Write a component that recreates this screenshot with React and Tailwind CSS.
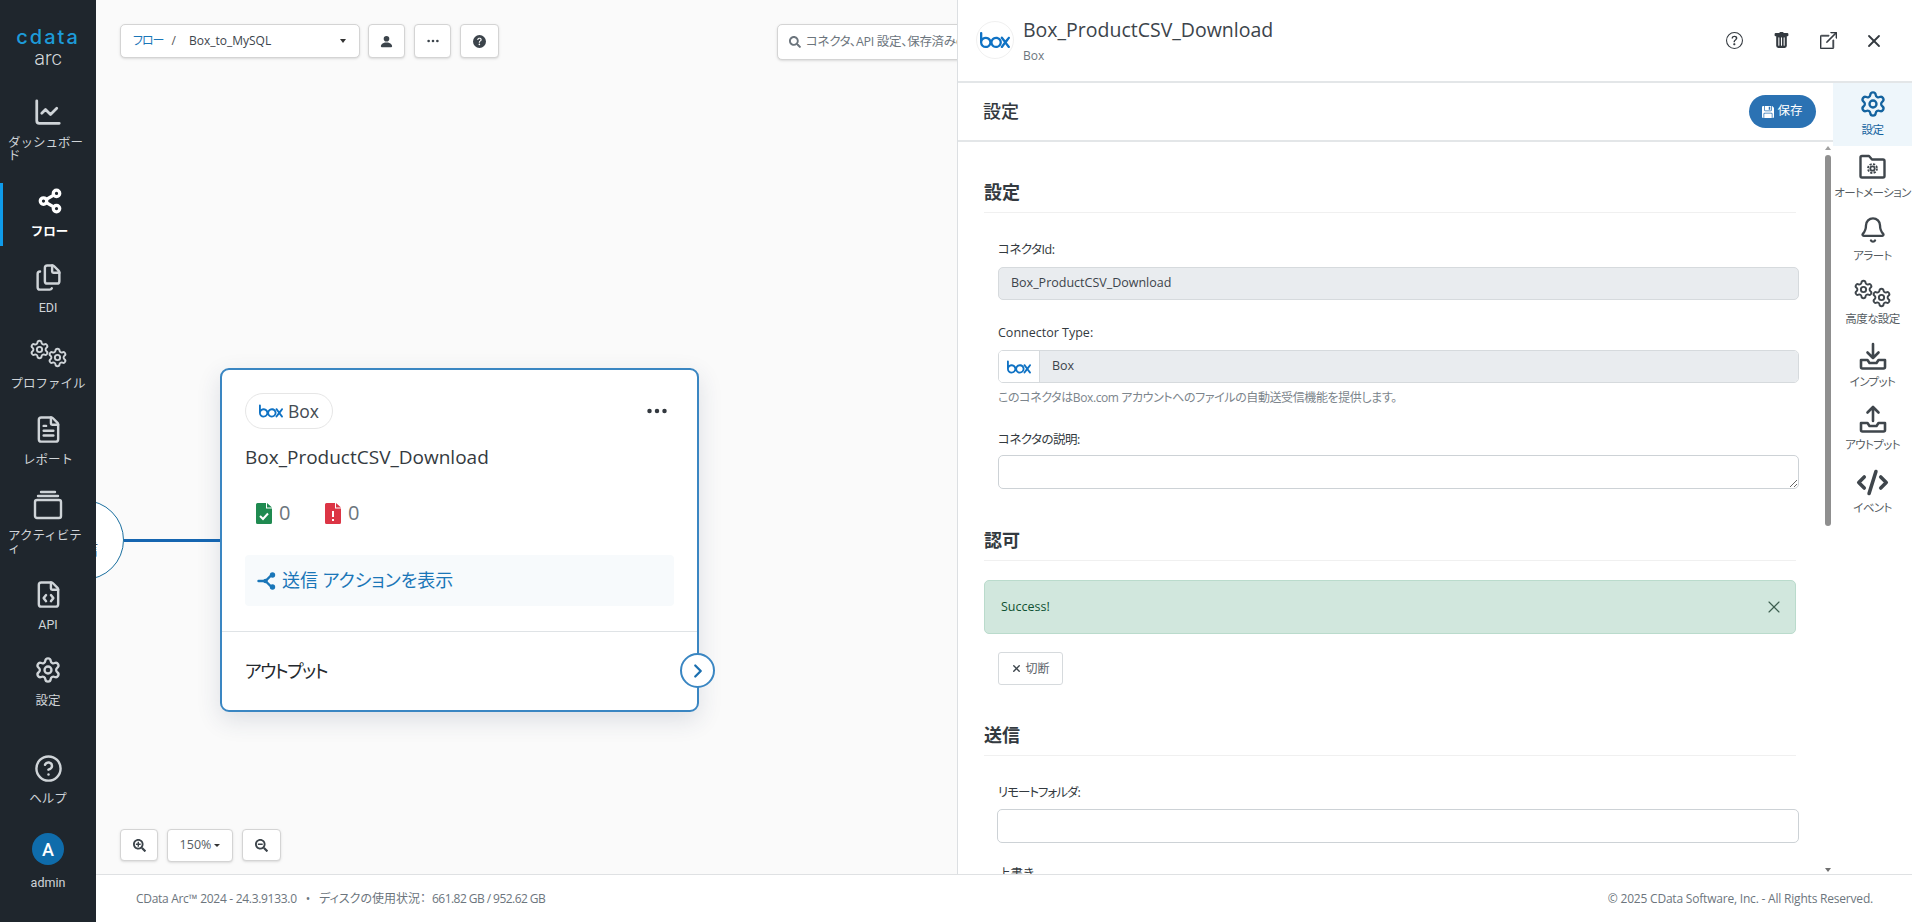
import {
  Bell,
  ChartLine,
  ChevronRight,
  CircleHelp,
  CodeXml,
  FileCode,
  FileText,
  Files,
  Settings,
  Share2,
  X,
} from "lucide-react";
import {
  BsBoxArrowUpRight,
  BsFloppyFill,
  BsPersonFill,
  BsQuestionCircle,
  BsQuestionCircleFill,
  BsThreeDots,
  BsTrashFill,
} from "react-icons/bs";
import { FaSearch, FaSearchMinus, FaSearchPlus } from "react-icons/fa";
import { SiBox } from "react-icons/si";

function TwoGears({ size = 21, stroke = 2.2 }) {
  return (
    <div className="flex items-center">
      <Settings size={size} strokeWidth={stroke} className="-mt-[8px]" />
      <Settings size={size} strokeWidth={stroke} className="-ml-[3px] mt-[8px]" />
    </div>
  );
}

function Stacked() {
  return (
    <svg width="32" height="30" viewBox="0 0 32 30" fill="none" stroke="currentColor" strokeWidth="2.4" strokeLinecap="round">
      <rect x="3" y="10" width="26" height="18" rx="2" />
      <path d="M6 6h20M9 2h14" />
    </svg>
  );
}

function Tray({ up }) {
  return (
    <svg width="30" height="30" viewBox="0 0 30 30" fill="none" stroke="currentColor" strokeWidth="2.6" strokeLinecap="round" strokeLinejoin="round">
      <path d="M3 19v7a1.5 1.5 0 0 0 1.5 1.5h21A1.5 1.5 0 0 0 27 26v-7h-6.5l-2 3h-7l-2-3z" />
      {up ? <path d="M15 17V3M9.5 8.5 15 3l5.5 5.5" /> : <path d="M15 3v14M9.5 11.5 15 17l5.5-5.5" />}
    </svg>
  );
}

function FolderGear() {
  return (
    <svg width="27" height="26" viewBox="0 0 27 26" fill="none" stroke="currentColor" strokeWidth="2.4" strokeLinejoin="round">
      <path d="M1.500 3.500A1.500 1.500 0 0 1 3 2h7l3 3.500h11A1.500 1.500 0 0 1 25.500 7v15a1.500 1.500 0 0 1-1.500 1.500H3A1.500 1.500 0 0 1 1.500 22z" />
      <circle cx="13.500" cy="14.500" r="2.200" strokeWidth="1.800" />
      <circle cx="13.500" cy="14.500" r="4.500" strokeWidth="1.800" strokeDasharray="2.200 1.330" />
    </svg>
  );
}

function SendIcon() {
  return (
    <svg width="20" height="20" viewBox="0 0 20 20" fill="none" stroke="currentColor" strokeWidth="2.4" strokeLinecap="round">
      <path d="M1.500 10h7l6-6M8.500 10l6 6" />
      <circle cx="15.500" cy="4" r="2.700" fill="currentColor" stroke="none" />
      <circle cx="15.500" cy="16" r="2.700" fill="currentColor" stroke="none" />
      <circle cx="8.500" cy="10" r="2.200" fill="currentColor" stroke="none" />
    </svg>
  );
}

function FileStatus({ color, ok }) {
  return (
    <svg width="16" height="21" viewBox="0 0 16 21" className={color}>
      <path fill="currentColor" d="M1.5 0H10v5.5h6v14a1.5 1.5 0 0 1-1.5 1.5h-13A1.5 1.5 0 0 1 0 19.5v-18A1.5 1.5 0 0 1 1.5 0zM11 0l5 4.500h-5z" />
      {ok ? (
        <path d="M4 13l3 3 5-5.500" stroke="#fff" strokeWidth="2" fill="none" />
      ) : (
        <path d="M8 8v6M8 16v2" stroke="#fff" strokeWidth="2" fill="none" />
      )}
    </svg>
  );
}

const navItems = [
  { label: "ダッシュボード", icon: <ChartLine size={30} strokeWidth={2.2} /> },
  { label: "フロー", icon: <Share2 size={26} strokeWidth={3} />, active: true },
  { label: "EDI", icon: <Files size={29} strokeWidth={2} /> },
  { label: "プロファイル", icon: <TwoGears /> },
  { label: "レポート", icon: <FileText size={29} strokeWidth={2} /> },
  { label: "アクティビティ", icon: <Stacked /> },
  { label: "API", icon: <FileCode size={29} strokeWidth={2} /> },
  { label: "設定", icon: <Settings size={28} strokeWidth={2} /> },
];

const railItems = [
  { label: "設定", icon: <Settings size={28} strokeWidth={2} />, active: true },
  { label: "オートメーション", icon: <FolderGear /> },
  { label: "アラート", icon: <Bell size={28} strokeWidth={2} /> },
  { label: "高度な設定", icon: <TwoGears /> },
  { label: "インプット", icon: <Tray /> },
  { label: "アウトプット", icon: <Tray up /> },
  { label: "イベント", icon: <CodeXml size={33} strokeWidth={2.6} /> },
];

function NavItem({ label, icon, active }) {
  return (
    <div className={`relative flex flex-col items-center pt-[4px] pb-[8px] mb-[13px] ${active ? "border-l-[3px] border-[#0f9bea] text-white font-bold" : "text-[#cfd4d8]"}`}>
      <div className="h-[28px] flex items-center justify-center">{icon}</div>
      <div className="mt-[10px] w-[80px] flex flex-col items-center">
        <span className="text-[12.5px] leading-[13px]">{label}</span>
      </div>
    </div>
  );
}

function RailItem({ label, icon, active }) {
  return (
    <div className={`h-[63px] flex flex-col items-center pt-[6px] ${active ? "bg-[#eef6fb] text-[#14639f]" : "text-[#3f464c]"}`}>
      <div className="h-[30px] flex items-center justify-center">{icon}</div>
      <span className={`mt-[3px] text-[11.5px] tracking-[-0.6px] leading-[16px] whitespace-nowrap ${active ? "" : "text-[#555c62]"}`}>{label}</span>
    </div>
  );
}

function SectionHead({ children, className = "" }) {
  return (
    <div className={`border-b border-[#f0f0f0] h-[41px] flex items-center ${className}`}>
      <h2 className="text-[18px] font-semibold text-[#333a40] leading-none">{children}</h2>
    </div>
  );
}

function Label({ children, className = "" }) {
  return <div className={`text-[12.5px] leading-[16px] text-[#333a40] ${className}`}>{children}</div>;
}

function IconBtn({ children, className = "" }) {
  return (
    <button className={`h-[34px] shrink-0 border border-[#d4d4d4] bg-white rounded-[4px] flex items-center justify-center text-[#3c444b] shadow-sm ${className}`}>
      {children}
    </button>
  );
}

function Canvas() {
  return (
    <div className="relative flex-1 min-w-0 flex flex-col overflow-hidden bg-[#fafafa]">
      <div className="flex pl-[24px] pt-[24px]">
        <div className="w-[240px] h-[34px] shrink-0 whitespace-nowrap border border-[#d4d4d4] bg-white rounded-[5px] flex items-center px-[12px] text-[12px] shadow-sm">
          <span className="text-[#1a76b8] tracking-[-1px]">フロー</span>
          <span className="ml-[8px] text-[#555]">/</span>
          <span className="ml-[13px] text-[#3c444b]">Box_to_MySQL</span>
          <span className="ml-auto mr-[1px] w-0 h-0 border-x-[3px] border-x-transparent border-t-[4px] border-t-[#333]" />
        </div>
        <IconBtn className="w-[37px] ml-[8px]"><BsPersonFill size={15} /></IconBtn>
        <IconBtn className="w-[37px] ml-[9px]"><BsThreeDots size={14} /></IconBtn>
        <IconBtn className="w-[39px] ml-[9px]"><BsQuestionCircleFill size={13} /></IconBtn>
        <div className="ml-[278px] w-[300px] h-[36px] shrink-0 border border-[#d4d4d4] bg-white rounded-[5px] flex items-center pl-[11px] text-[12.5px] tracking-[-0.3px] text-[#6c757d] shadow-sm whitespace-nowrap overflow-hidden">
          <FaSearch size={12} className="mr-[5px] shrink-0" />
          コネクタ、API 設定、保存済みのフローを検索
        </div>
      </div>

      {/* nodes sit on the free canvas */}
      <div className="absolute left-[124px] top-[368px] w-[479px] h-[344px] bg-white border-2 border-[#3a86c2] rounded-[9px] shadow-[0_8px_24px_rgba(40,60,90,0.14)] flex flex-col">
        <div className="px-[23px] pt-[23px] flex-1">
          <div className="flex items-center justify-between">
            <div className="h-[36px] w-[88px] border border-[#e6e6e6] rounded-full flex items-center pl-[13px] gap-[5px] text-[17.5px] text-[#444b52]">
              <SiBox size={24} className="text-[#0f72c4]" />
              Box
            </div>
            <BsThreeDots size={24} className="text-[#33393f] mr-[5px]" />
          </div>
          <div className="mt-[15px] text-[19px] leading-[26px] text-[#343a40]">Box_ProductCSV_Download</div>
          <div className="mt-[31px] flex pl-[11px] text-[20px] leading-[24px] text-[#6c757d]">
            <div className="flex items-center gap-[7px] w-[69px]"><FileStatus color="text-[#1f8a50]" ok />0</div>
            <div className="flex items-center gap-[7px]"><FileStatus color="text-[#dc3545]" />0</div>
          </div>
          <div className="mt-[30px] h-[51px] bg-[#f7fafc] rounded-[4px] flex items-center pl-[12px] gap-[5px] text-[18px] text-[#1a76b8]">
            <SendIcon />
            送信 アクションを表示
          </div>
        </div>
        <div className="relative border-t border-[#dfe3e6] h-[79px] flex items-center pl-[23px] text-[18px] tracking-[-1.6px] text-[#24292e]">
          アウトプット
          <div className="absolute -right-[18px] top-[21px] w-[35px] h-[35px] rounded-full border-2 border-[#3a86c2] bg-white flex items-center justify-center text-[#1a6fb0]">
            <ChevronRight size={22} strokeWidth={2.5} />
          </div>
        </div>
      </div>
      <div className="absolute -left-[52px] top-[500px] w-[80px] h-[80px] rounded-full border border-[#1a6f9f] bg-white flex items-center justify-end pr-[25px] text-[16px] text-[#444b52]">
        <span className="pt-[18px]">信</span>
      </div>
      <div className="absolute left-[28px] top-[539px] w-[96px] h-[3px] bg-[#1565b0]" />

      <div className="mt-auto pl-[24px] pb-[12px] flex gap-[9px] items-start">
        <IconBtn className="w-[38px] !h-[32px]"><FaSearchPlus size={13} /></IconBtn>
        <IconBtn className="w-[66px] !h-[33px] text-[12.5px] text-[#555c62] gap-[3px]">
          150%
          <span className="w-0 h-0 border-x-[3px] border-x-transparent border-t-[3px] border-t-[#333]" />
        </IconBtn>
        <IconBtn className="w-[39px] !h-[32px]"><FaSearchMinus size={13} /></IconBtn>
      </div>
    </div>
  );
}

function Panel() {
  return (
    <div className="w-[955px] shrink-0 bg-white border-l border-[#dcdfe2] flex flex-col">
      <div className="h-[83px] shrink-0 border-b-2 border-[#e3e6e8] flex items-center pl-[18px] pr-[28px]">
        <div className="w-[38px] h-[38px] -mt-[2px] rounded-full border border-[#f0f0f0] flex items-center justify-center">
          <SiBox size={30} className="text-[#0f72c4]" />
        </div>
        <div className="ml-[9px] -mt-[1px]">
          <div className="text-[19.5px] leading-[26px] text-[#3c444b]">Box_ProductCSV_Download</div>
          <div className="mt-[5px] text-[12px] leading-[16px] text-[#6c757d]">Box</div>
        </div>
        <div className="ml-auto flex items-center gap-[30px] text-[#343a40]">
          <BsQuestionCircle size={17} />
          <BsTrashFill size={17} />
          <BsBoxArrowUpRight size={17} strokeWidth={0.6} />
          <X size={20} strokeWidth={2.2} className="-ml-[3px]" />
        </div>
      </div>
      <div className="flex-1 flex min-h-0">
        <div className="flex-1 flex flex-col min-w-0">
          <div className="h-[59px] shrink-0 border-b-2 border-[#e3e6e8] flex items-center justify-between pl-[25px] pr-[17px]">
            <span className="text-[18px] font-medium text-[#343a40]">設定</span>
            <button className="h-[33px] w-[67px] rounded-full bg-[#2b72b3] text-white text-[12.5px] flex items-center justify-center gap-[3px]">
              <BsFloppyFill size={12} />
              保存
            </button>
          </div>
          <div className="relative flex-1 min-h-0 overflow-hidden pl-[26px] pr-[37px]">
            <SectionHead className="mt-[30px]">設定</SectionHead>
            <Label className="ml-[14px] mt-[29px] tracking-[-0.5px]">コネクタId:</Label>
            <div className="mt-[9px] ml-[14px] -mr-[3px] h-[33px] bg-[#e9ecef] border border-[#d6dadd] rounded-[5px] flex items-center pl-[12px] text-[12.5px] text-[#3c444b]">Box_ProductCSV_Download</div>
            <Label className="ml-[14px] mt-[25px]">Connector Type:</Label>
            <div className="mt-[9px] ml-[14px] -mr-[3px] h-[33px] border border-[#d6dadd] rounded-[5px] flex overflow-hidden text-[12.5px] text-[#3c444b]">
              <div className="w-[41px] bg-white border-r border-[#d6dadd] flex items-center justify-center">
                <SiBox size={24} className="text-[#0f72c4]" />
              </div>
              <div className="flex-1 bg-[#e9ecef] flex items-center pl-[12px]">Box</div>
            </div>
            <div className="ml-[14px] mt-[7px] text-[12px] leading-[16px] tracking-[-0.4px] text-[#7c858c]">このコネクタはBox.com アカウントへのファイルの自動送受信機能を提供します。</div>
            <Label className="ml-[14px] mt-[26px] tracking-[-0.5px]">コネクタの説明:</Label>
            <textarea className="block mt-[7px] ml-[14px] w-[801px] h-[34px] border border-[#cdd2d6] rounded-[5px] bg-white" />
            <SectionHead className="mt-[31px]">認可</SectionHead>
            <div className="mt-[19px] h-[54px] bg-[#d1e7dd] border border-[#badbcc] rounded-[5px] flex items-center justify-between pl-[16px] pr-[11px] text-[12.5px] text-[#0f5132]">
              Success!
              <X size={20} strokeWidth={1.4} className="text-[#3d5f50]" />
            </div>
            <button className="mt-[18px] ml-[14px] h-[33px] w-[65px] border border-[#d6dadd] rounded-[3px] bg-white text-[12px] text-[#5a6268] flex items-center justify-center gap-[3px]">
              <X size={11} strokeWidth={3} className="text-[#3c444b]" />
              切断
            </button>
            <SectionHead className="mt-[30px]">送信</SectionHead>
            <Label className="ml-[14px] mt-[29px] tracking-[-1px]">リモートフォルダ:</Label>
            <div className="mt-[8px] ml-[13px] -mr-[3px] h-[34px] bg-white border border-[#cdd2d6] rounded-[5px]" />
            <Label className="ml-[14px] mt-[23px]">上書き</Label>
            {/* custom scrollbar */}
            <div className="absolute right-[2px] top-[4px] bottom-[2px] w-[7px] flex flex-col items-center">
              <span className="w-0 h-0 border-x-[3px] border-x-transparent border-b-[4px] border-b-[#a0a0a0]" />
              <div className="mt-[5px] h-[371px] w-[6px] rounded-full bg-[#8f8f8f]" />
              <span className="mt-auto w-0 h-0 border-x-[3px] border-x-transparent border-t-[4px] border-t-[#707070]" />
            </div>
          </div>
        </div>
        <div className="w-[79px] shrink-0 flex flex-col">
          {railItems.map((item) => (
            <RailItem key={item.label} {...item} />
          ))}
        </div>
      </div>
    </div>
  );
}

export default function App() {
  return (
    <div className="h-[922px] w-[1912px] flex overflow-hidden font-['Open_Sans','Noto_Sans_CJK_JP',sans-serif]">
      <aside className="w-[96px] shrink-0 bg-[#1f262d] flex flex-col font-['Roboto','Noto_Sans_CJK_JP',sans-serif] z-10">
        <div className="h-[94px] flex flex-col items-center pt-[26px]">
          <span className="text-[#1d9bd9] text-[20px] leading-[22px] font-medium tracking-[2px] font-['Inter',sans-serif]">cdata</span>
          <span className="text-[#d8dcdf] text-[20px] leading-[22px] font-light -mt-[1px]">arc</span>
        </div>
        <nav className="flex-1">
          {navItems.map((item) => (
            <NavItem key={item.label} {...item} />
          ))}
        </nav>
        <div className="pb-[31px]">
          <div className="mb-[20px]">
            <NavItem label="ヘルプ" icon={<CircleHelp size={29} strokeWidth={2} />} />
          </div>
          <div className="flex flex-col items-center">
            <div className="w-[32px] h-[32px] rounded-full bg-[#0f6cab] text-white text-[18px] font-medium flex items-center justify-center">A</div>
            <span className="mt-[10px] text-[12.5px] leading-[16px] text-[#cfd4d8]">admin</span>
          </div>
        </div>
      </aside>
      <div className="flex-1 flex flex-col min-w-0 [font-feature-settings:'palt']">
        <div className="h-[874px] flex min-h-0">
          <Canvas />
          <Panel />
        </div>
        <footer className="flex-1 bg-white border-t border-[#dfe1e3] flex items-center justify-between pl-[40px] pr-[39px] text-[12px] text-[#6c757d]">
          <span className="flex items-center whitespace-nowrap">
            <span className="tracking-[-0.3px]">CData Arc™ 2024 - 24.3.9133.0</span>
            <span className="mx-[9px]">•</span>
            <span>ディスクの使用状況：</span>
            <span className="ml-[6px] tracking-[-0.55px]">661.82 GB / 952.62 GB</span>
          </span>
          <span className="tracking-[-0.2px]">© 2025 CData Software, Inc. - All Rights Reserved.</span>
        </footer>
      </div>
    </div>
  );
}
